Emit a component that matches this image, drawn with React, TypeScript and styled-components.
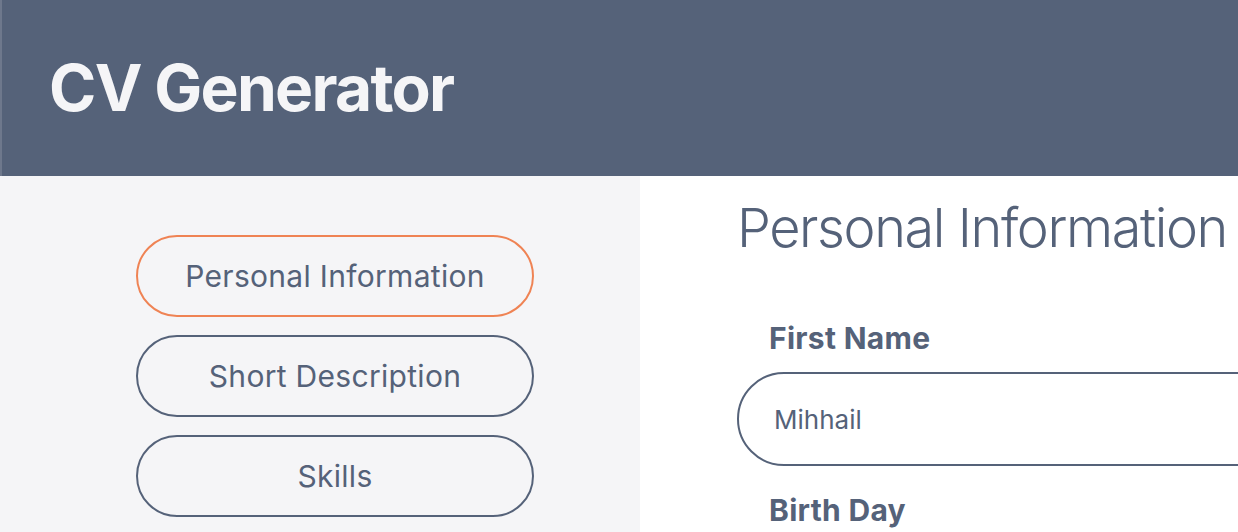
import React from "react";
import styled, { createGlobalStyle } from "styled-components";

const GlobalStyle = createGlobalStyle`
  html, body {
    margin: 0;
    padding: 0;
    background: #ffffff;
    font-family: Inter, "Noto Sans", "Liberation Sans", sans-serif;
    overflow: hidden;
  }
  * { box-sizing: border-box; }
`;

const Page = styled.div`
  display: flex;
  flex-direction: column;
  width: 1238px;
  height: 532px;
  overflow: hidden;
`;

const Header = styled.header`
  height: 176px;
  flex: none;
  display: flex;
  align-items: center;
  padding-left: 47px;
  background: #556279;
  border-left: 2px solid #6e788c;
`;

const Title = styled.h1`
  margin: 0;
  font-size: 64px;
  line-height: 1;
  font-weight: 700;
  color: #f5f5f7;
  letter-spacing: -1.7px;
`;

const Body = styled.div`
  flex: 1;
  display: flex;
  min-height: 0;
`;

const Sidebar = styled.nav`
  width: 640px;
  flex: none;
  background: #f5f5f7;
  padding: 59px 0 0 136px;
  display: flex;
  flex-direction: column;
  gap: 18px;
`;

const NavButton = styled.button<{ $active?: boolean }>`
  width: 398px;
  height: 82px;
  border-radius: 41px;
  border: 2px solid ${(p) => (p.$active ? "#ef8354" : "#556279")};
  background: transparent;
  color: #556279;
  font-family: inherit;
  font-size: 30px;
  font-weight: 400;
  letter-spacing: 0.3px;
  line-height: 1;
  display: flex;
  align-items: center;
  justify-content: center;
  cursor: pointer;
`;

const Main = styled.main`
  flex: 1;
  background: #ffffff;
  padding: 25px 0 0 97px;
  display: flex;
  flex-direction: column;
`;

const Heading = styled.h2`
  margin: 0 0 68px;
  font-size: 54px;
  line-height: 1;
  font-weight: 300;
  letter-spacing: -1.4px;
  color: #556279;
  white-space: nowrap;
`;

const Field = styled.div`
  display: flex;
  flex-direction: column;
  margin-bottom: 29px;
`;

const Label = styled.label`
  font-size: 30px;
  line-height: 1;
  font-weight: 700;
  letter-spacing: 0.3px;
  color: #556279;
  padding-left: 32px;
  margin-bottom: 19px;
`;

const Input = styled.input`
  width: 700px;
  height: 94px;
  border: 2px solid #556279;
  border-radius: 47px;
  padding: 0 0 0 35px;
  font-family: inherit;
  font-size: 26px;
  color: #556279;
  background: #ffffff;
  outline: none;
`;

export default function App() {
  return (
    <>
      <GlobalStyle />
      <Page>
        <Header>
          <Title>CV Generator</Title>
        </Header>
        <Body>
          <Sidebar>
            <NavButton $active>Personal Information</NavButton>
            <NavButton>Short Description</NavButton>
            <NavButton>Skills</NavButton>
          </Sidebar>
          <Main>
            <Heading>Personal Information</Heading>
            <Field>
              <Label>First Name</Label>
              <Input defaultValue="Mihhail" />
            </Field>
            <Field>
              <Label>Birth Day</Label>
              <Input defaultValue="" />
            </Field>
          </Main>
        </Body>
      </Page>
    </>
  );
}
